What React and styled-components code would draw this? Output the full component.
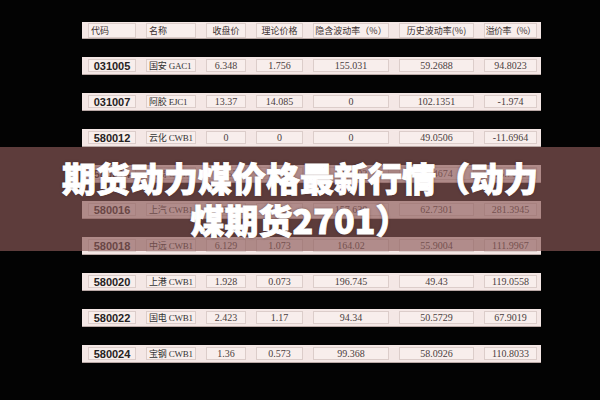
import React from "react";
import styled, { createGlobalStyle } from "styled-components";

const GlobalStyle = createGlobalStyle`
  html, body {
    margin: 0;
    padding: 0;
    background: #030303;
  }
  #root {
    width: 600px;
    height: 400px;
    overflow: hidden;
  }
`;

const Page = styled.div`
  position: relative;
  width: 600px;
  height: 400px;
  background: #030303;
  padding: 22px 0 0 82px;
  box-sizing: border-box;
`;

const Table = styled.div`
  width: 459px;
  display: flex;
  flex-direction: column;
  gap: 18px;
`;

const Row = styled.div`
  display: grid;
  grid-template-columns: 48px 50px 40px 47px 76px 75px 53px;
  column-gap: 10px;
  align-items: center;
  height: ${(p) => (p.$head ? "17px" : "18px")};
  padding: 0 4px 0 6px;
  background: #f4e7e5;
  border-bottom: 1px solid #b9a8a5;
  box-sizing: border-box;
`;

const Cell = styled.div`
  height: ${(p) => (p.$head ? "15px" : "13px")};
  box-sizing: border-box;
  border: 1px solid #dccdca;
  background: #f8eeec;
  display: flex;
  align-items: center;
  justify-content: ${(p) => (p.$left ? "flex-start" : "center")};
  padding: ${(p) => (p.$left ? "0 0 0 2px" : "0")};
  white-space: nowrap;
  overflow: hidden;
  font-family: "Liberation Serif", "Noto Sans CJK SC", serif;
  font-size: 10px;
  color: #4a4040;
`;

const HeadCell = styled(Cell)`
  font-family: "Noto Sans CJK SC", sans-serif;
  font-size: 9px;
  color: #3a3030;
  overflow: visible;
  letter-spacing: ${(p) => (p.$tight ? "-0.6px" : "0")};
`;

const CodeCell = styled(Cell)`
  font-family: "Liberation Sans", Arial, sans-serif;
  font-weight: 700;
  font-size: 11px;
  color: #262222;
`;

const NameCell = styled(Cell)`
  font-family: "Liberation Serif", "Noto Sans CJK SC", serif;
  font-size: 9px;
  color: #333;
  letter-spacing: -0.2px;
`;

const Band = styled.div`
  position: absolute;
  left: 0;
  top: 147px;
  width: 600px;
  height: 104px;
  background: rgba(139, 89, 88, 0.66);
  display: flex;
  align-items: center;
  justify-content: center;
`;

const Title = styled.h1`
  margin: 0;
  width: 490px;
  text-align: center;
  font-family: "Noto Sans CJK SC", sans-serif;
  font-weight: 900;
  font-size: 34px;
  line-height: 42px;
  color: #ffffff;
  -webkit-text-stroke: 0.9px #ffffff;
  text-shadow: 0 0 3px rgba(40, 20, 20, 0.6);
`;

const headers = [
  { label: "代码", left: true },
  { label: "名称", left: true },
  { label: "收盘价" },
  { label: "理论价格" },
  { label: "隐含波动率（%）" },
  { label: "历史波动率(%)" },
  { label: "溢价率（%）", tight: true },
];

const rows = [
  ["031005", "国安 GAC1", "6.348", "1.756", "155.031", "59.2688", "94.8023"],
  ["031007", "阿胶 EJC1", "13.37", "14.085", "0", "102.1351", "-1.974"],
  ["580012", "云化 CWB1", "0", "0", "0", "49.0506", "-11.6964"],
  ["580014", "深高 CWB1", "0.152", "0.038", "128.402", "51.4674", "15.7630"],
  ["580016", "上汽 CWB1", "0.891", "0.236", "157.638", "62.7301", "281.3945"],
  ["580018", "中远 CWB1", "6.129", "1.073", "164.02", "55.9004", "111.9967"],
  ["580020", "上港 CWB1", "1.928", "0.073", "196.745", "49.43", "119.0558"],
  ["580022", "国电 CWB1", "2.423", "1.17", "94.34", "50.5729", "67.9019"],
  ["580024", "宝钢 CWB1", "1.36", "0.573", "99.368", "58.0926", "110.8033"],
];

export default function App() {
  return (
    <>
      <GlobalStyle />
      <Page>
        <Table>
          <Row $head>
            {headers.map((h) => (
              <HeadCell key={h.label} $head $left={h.left} $tight={h.tight}>
                {h.label}
              </HeadCell>
            ))}
          </Row>
          {rows.map(([code, name, ...nums]) => (
            <Row key={code}>
              <CodeCell>{code}</CodeCell>
              <NameCell $left>{name}</NameCell>
              {nums.map((n, i) => (
                <Cell key={i}>{n}</Cell>
              ))}
            </Row>
          ))}
        </Table>
        <Band>
          <Title>期货动力煤价格最新行情（动力煤期货2701）</Title>
        </Band>
      </Page>
    </>
  );
}
